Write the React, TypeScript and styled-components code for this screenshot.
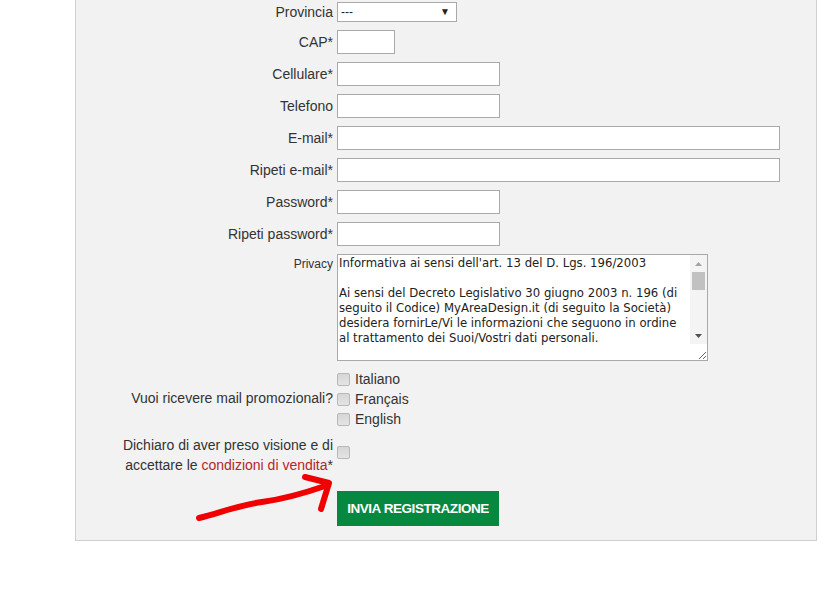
import React from 'react';
import styled, { createGlobalStyle } from 'styled-components';

const GlobalStyle = createGlobalStyle`
  html, body {
    margin: 0;
    padding: 0;
    background: #ffffff;
  }
  body {
    font-family: "Liberation Sans", Arial, sans-serif;
    color: #333333;
  }
`;

const Page = styled.div`
  position: relative;
  width: 839px;
  height: 611px;
  padding-left: 75px;
  box-sizing: border-box;
`;

const Panel = styled.div`
  width: 742px;
  box-sizing: border-box;
  background: #f2f2f2;
  border: 1px solid #cfcfcf;
  border-top: none;
  padding: 2px 0 14px 0;
`;

const Form = styled.form`
  display: grid;
  grid-template-columns: 257px 1fr;
  column-gap: 4px;
  row-gap: 8px;
  align-items: center;
  margin: 0;
`;

const Label = styled.label<{ $small?: boolean; $top?: boolean }>`
  text-align: right;
  font-size: ${p => (p.$small ? '12px' : '14px')};
  line-height: 20px;
  color: #333333;
  align-self: ${p => (p.$top ? 'start' : 'center')};
`;

const Link = styled.a`
  color: #b5262b;
  text-decoration: none;
`;

const Field = styled.input<{ $w: number }>`
  display: block;
  width: ${p => p.$w}px;
  height: 24px;
  box-sizing: border-box;
  border: 1px solid #a9a9a9;
  background: #ffffff;
  padding: 2px 3px;
  font: 13px "Liberation Sans", Arial, sans-serif;
  outline: none;
`;

const SelectWrap = styled.div`
  position: relative;
  width: 120px;
  height: 20px;
`;

const Select = styled.select`
  display: block;
  appearance: none;
  width: 120px;
  height: 20px;
  box-sizing: border-box;
  border: 1px solid #a9a9a9;
  border-radius: 0;
  background: #ffffff;
  padding: 0 3px;
  font: 12px "Liberation Sans", Arial, sans-serif;
  color: #222222;
  outline: none;
`;

const SelectArrow = styled.span`
  position: absolute;
  right: 7px;
  top: 4px;
  font-size: 10px;
  line-height: 12px;
  color: #222222;
  pointer-events: none;
`;

const TextareaWrap = styled.div`
  position: relative;
  width: 371px;
  height: 107px;
`;

const Textarea = styled.textarea`
  display: block;
  width: 371px;
  height: 107px;
  box-sizing: border-box;
  border: 1px solid #a9a9a9;
  background: #ffffff;
  padding: 1px 19px 1px 1px;
  font: 11.7px/15px "DejaVu Sans", Verdana, sans-serif;
  color: #222222;
  overflow: hidden;
  resize: both;
  outline: none;
`;

/* painted scrollbar, sits over the textarea's right edge */
const ScrollBar = styled.div`
  position: absolute;
  top: 1px;
  right: 1px;
  width: 17px;
  bottom: 17px;
  background: #f4f4f4;
  display: flex;
  flex-direction: column;
  pointer-events: none;
`;

const ScrollButton = styled.div`
  height: 17px;
  display: flex;
  align-items: center;
  justify-content: center;
`;

const ScrollThumb = styled.div`
  height: 18px;
  margin: 0 2px;
  background: #c1c1c1;
`;

const ScrollTrack = styled.div`
  flex: 1;
`;

const CheckList = styled.div`
  display: flex;
  flex-direction: column;
  margin-bottom: -2px;
`;

const CheckRow = styled.label`
  display: flex;
  align-items: center;
  height: 20px;
  font-size: 14px;
  color: #333333;
`;

const Check = styled.input.attrs({ type: 'checkbox' })`
  display: block;
  appearance: none;
  width: 13px;
  height: 13px;
  margin: 0 5px 0 0;
  box-sizing: border-box;
  border: 1px solid #b8b8b8;
  border-radius: 2px;
  background: linear-gradient(#d6d6d6, #e4e4e4);
`;

const AcceptBox = styled.div`
  padding-bottom: 5px;
`;

const SubmitRow = styled.div`
  grid-column: 2;
  margin-top: 8px;
`;

const Submit = styled.button`
  display: block;
  width: 162px;
  height: 35px;
  border: none;
  background: #078841;
  color: #ffffff;
  font: bold 13.5px "Liberation Sans", Arial, sans-serif;
  letter-spacing: -0.45px;
  text-transform: uppercase;
  padding: 0;
`;

const Arrow = styled.svg`
  position: absolute;
  left: 190px;
  top: 468px;
  pointer-events: none;
`;

const privacyText = `Informativa ai sensi dell'art. 13 del D. Lgs. 196/2003

Ai sensi del Decreto Legislativo 30 giugno 2003 n. 196 (di seguito il Codice) MyAreaDesign.it (di seguito la Società) desidera fornirLe/Vi le informazioni che seguono in ordine al trattamento dei Suoi/Vostri dati personali.

1. Finalità del trattamento
I dati da Lei/Voi forniti verranno trattati per le seguenti finalità.`;

const fields: { label: string; w: number; type?: string }[] = [
  { label: 'CAP*', w: 58 },
  { label: 'Cellulare*', w: 163 },
  { label: 'Telefono', w: 163 },
  { label: 'E-mail*', w: 443 },
  { label: 'Ripeti e-mail*', w: 443 },
  { label: 'Password*', w: 163, type: 'password' },
  { label: 'Ripeti password*', w: 163, type: 'password' },
];

export default function App() {
  return (
    <Page>
      <GlobalStyle />
      <Panel>
        <Form onSubmit={e => e.preventDefault()}>
          <Label>Provincia</Label>
          <SelectWrap>
            <Select defaultValue="">
              <option value="">---</option>
            </Select>
            <SelectArrow>▼</SelectArrow>
          </SelectWrap>

          {fields.map(f => (
            <React.Fragment key={f.label}>
              <Label>{f.label}</Label>
              <div>
                <Field $w={f.w} type={f.type || 'text'} />
              </div>
            </React.Fragment>
          ))}

          <Label $small $top>Privacy</Label>
          <TextareaWrap>
            <Textarea readOnly defaultValue={privacyText} />
            <ScrollBar>
              <ScrollButton>
                <svg width="7" height="4" viewBox="0 0 7 4"><polygon points="3.5,0 7,4 0,4" fill="#a3a3a3" /></svg>
              </ScrollButton>
              <ScrollThumb />
              <ScrollTrack />
              <ScrollButton>
                <svg width="7" height="4" viewBox="0 0 7 4"><polygon points="0,0 7,0 3.5,4" fill="#505050" /></svg>
              </ScrollButton>
            </ScrollBar>
          </TextareaWrap>

          <Label>Vuoi ricevere mail promozionali?</Label>
          <CheckList>
            <CheckRow><Check />Italiano</CheckRow>
            <CheckRow><Check />Français</CheckRow>
            <CheckRow><Check />English</CheckRow>
          </CheckList>

          <Label>
            Dichiaro di aver preso visione e di
            <br />
            accettare le <Link href="#">condizioni di vendita</Link>*
          </Label>
          <AcceptBox>
            <Check />
          </AcceptBox>

          <SubmitRow>
            <Submit type="submit">Invia registrazione</Submit>
          </SubmitRow>
        </Form>
      </Panel>
      <Arrow width="150" height="60" viewBox="190 468 150 60">
        <path
          d="M199 518 C 222 512, 240 505, 262 502 S 302 494, 325 486"
          fill="none"
          stroke="#f00000"
          strokeWidth="6"
          strokeLinecap="round"
          strokeLinejoin="round"
        />
        <path
          d="M305 477 L 329 483 L 321 509"
          fill="none"
          stroke="#f00000"
          strokeWidth="6"
          strokeLinecap="round"
          strokeLinejoin="round"
        />
      </Arrow>
    </Page>
  );
}
